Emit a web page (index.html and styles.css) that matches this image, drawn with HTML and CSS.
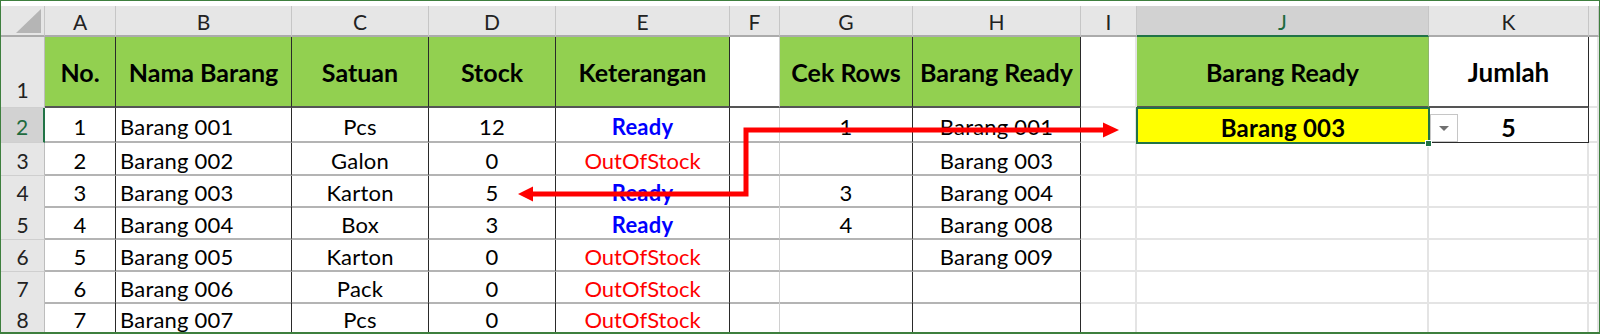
FILE: index.html
```html
<!DOCTYPE html>
<html>
<head>
<meta charset="utf-8">
<link rel="stylesheet" href="styles.css">
</head>
<body>
<div class="sheet">
  <div class="row colhead">
    <div class="ch corner"><svg width="26" height="25" viewBox="0 0 26 25"><polygon points="25,0 25,24 0,24" fill="#b5b5b5"/></svg></div>
    <div class="ch">A</div>
    <div class="ch">B</div>
    <div class="ch">C</div>
    <div class="ch">D</div>
    <div class="ch">E</div>
    <div class="ch">F</div>
    <div class="ch">G</div>
    <div class="ch">H</div>
    <div class="ch">I</div>
    <div class="ch sel">J</div>
    <div class="ch">K</div>
    <div class="ch"></div>
  </div>

  <div class="row r1">
    <div class="rh bottom">1</div>
    <div class="c t th">No.</div>
    <div class="c t th">Nama Barang</div>
    <div class="c t th">Satuan</div>
    <div class="c t th">Stock</div>
    <div class="c t th">Keterangan</div>
    <div class="c tf thb"></div>
    <div class="c t th">Cek Rows</div>
    <div class="c t th">Barang Ready</div>
    <div class="c g"></div>
    <div class="c jh th">Barang Ready</div>
    <div class="c kh thb b">Jumlah</div>
    <div class="c g"></div>
  </div>

  <div class="row r2">
    <div class="rh selrow">2</div>
    <div class="c t">1</div>
    <div class="c t left">Barang 001</div>
    <div class="c t">Pcs</div>
    <div class="c t">12</div>
    <div class="c t ready">Ready</div>
    <div class="c tf"></div>
    <div class="c t">1</div>
    <div class="c t">Barang 001</div>
    <div class="c g"></div>
    <div class="c jsel b">Barang 003</div>
    <div class="c kv b">5</div>
    <div class="c g"></div>
  </div>

  <div class="row r3">
    <div class="rh">3</div>
    <div class="c t">2</div>
    <div class="c t left">Barang 002</div>
    <div class="c t">Galon</div>
    <div class="c t">0</div>
    <div class="c t oos">OutOfStock</div>
    <div class="c tf"></div>
    <div class="c t"></div>
    <div class="c t">Barang 003</div>
    <div class="c g"></div>
    <div class="c g"></div>
    <div class="c g"></div>
    <div class="c g"></div>
  </div>

  <div class="row r4">
    <div class="rh">4</div>
    <div class="c t">3</div>
    <div class="c t left">Barang 003</div>
    <div class="c t">Karton</div>
    <div class="c t">5</div>
    <div class="c t ready">Ready</div>
    <div class="c tf"></div>
    <div class="c t">3</div>
    <div class="c t">Barang 004</div>
    <div class="c g"></div>
    <div class="c g"></div>
    <div class="c g"></div>
    <div class="c g"></div>
  </div>

  <div class="row r5">
    <div class="rh">5</div>
    <div class="c t">4</div>
    <div class="c t left">Barang 004</div>
    <div class="c t">Box</div>
    <div class="c t">3</div>
    <div class="c t ready">Ready</div>
    <div class="c tf"></div>
    <div class="c t">4</div>
    <div class="c t">Barang 008</div>
    <div class="c g"></div>
    <div class="c g"></div>
    <div class="c g"></div>
    <div class="c g"></div>
  </div>

  <div class="row r6">
    <div class="rh">6</div>
    <div class="c t">5</div>
    <div class="c t left">Barang 005</div>
    <div class="c t">Karton</div>
    <div class="c t">0</div>
    <div class="c t oos">OutOfStock</div>
    <div class="c tf"></div>
    <div class="c t"></div>
    <div class="c t">Barang 009</div>
    <div class="c g"></div>
    <div class="c g"></div>
    <div class="c g"></div>
    <div class="c g"></div>
  </div>

  <div class="row r7">
    <div class="rh">7</div>
    <div class="c t">6</div>
    <div class="c t left">Barang 006</div>
    <div class="c t">Pack</div>
    <div class="c t">0</div>
    <div class="c t oos">OutOfStock</div>
    <div class="c tf"></div>
    <div class="c t"></div>
    <div class="c t"></div>
    <div class="c g"></div>
    <div class="c g"></div>
    <div class="c g"></div>
    <div class="c g"></div>
  </div>

  <div class="row r8">
    <div class="rh">8</div>
    <div class="c t">7</div>
    <div class="c t left">Barang 007</div>
    <div class="c t">Pcs</div>
    <div class="c t">0</div>
    <div class="c t oos">OutOfStock</div>
    <div class="c tf"></div>
    <div class="c t"></div>
    <div class="c t"></div>
    <div class="c g"></div>
    <div class="c g"></div>
    <div class="c g"></div>
    <div class="c g"></div>
  </div>

  <div class="overlay">
    <div class="dropdown"><span class="tri"></span></div>
    <div class="handle"></div>
    <svg class="arrows" width="1600" height="334" viewBox="0 0 1600 334">
      <polyline points="531,194 746,194 746,130 1105,130" fill="none" stroke="#ff0000" stroke-width="5"/>
      <polygon points="518,194 533,186.5 533,201.5" fill="#ff0000"/>
      <polygon points="1119,130 1103,122.5 1103,137.5" fill="#ff0000"/>
    </svg>
  </div>
</div>
</body>
</html>
```

FILE: styles.css
```css
* { box-sizing: border-box; }

html, body {
  margin: 0;
  padding: 0;
  background: #ffffff;
}

body {
  font-family: Lato, "Liberation Sans", sans-serif;
  color: #000;
}

.sheet {
  position: relative;
  width: 1600px;
  height: 334px;
  border: 1px solid #3e7f3e;
  border-bottom-width: 2px;
  padding-top: 5px;
  display: flex;
  flex-direction: column;
  overflow: hidden;
  background: #fff;
}

.row {
  display: grid;
  grid-template-columns: 44px 71px 176px 137px 127px 174px 50px 133px 168px 56px 292px 160px 1fr;
}

.colhead { height: 31px; }
.r1 { height: 71px; }
.r2 { height: 35px; }
.r3 { height: 33px; }
.r4 { height: 31px; }
.r5 { height: 33px; }
.r6 { height: 32px; }
.r7 { height: 31px; }
.r8 { height: 29px; }

/* column headers */
.ch {
  background: #e6e6e6;
  border-right: 1px solid #c6c6c6;
  border-bottom: 2px solid #ababab;
  display: flex;
  align-items: center;
  justify-content: center;
  font-size: 21px;
  color: #222;
  padding-top: 2px;
}
.ch.corner {
  justify-content: flex-end;
  align-items: flex-end;
  padding: 0 2px 1px 0;
}
.ch.corner svg { display: block; }
.ch.sel {
  background: #d2d2d2;
  color: #1e6b3f;
  border-bottom: 2px solid #217346;
}

/* row headers */
.rh {
  background: #e6e6e6;
  border-right: 1px solid #bdbdbd;
  border-bottom: 1px solid #cfcfcf;
  display: flex;
  align-items: center;
  justify-content: center;
  font-size: 21px;
  color: #222;
  padding-top: 2px;
}
.rh.bottom {
  align-items: flex-end;
  padding-bottom: 5px;
}
.rh.selrow {
  background: #d2d2d2;
  color: #1e6b3f;
  border-right: 2px solid #217346;
}

/* cells */
.c {
  display: flex;
  align-items: center;
  justify-content: center;
  font-size: 22px;
  letter-spacing: 0.2px;
  white-space: nowrap;
  padding-top: 3px;
  border-right: 2px solid #e4e4e4;
  border-bottom: 2px solid #e4e4e4;
}
.c.t {
  border-right: 1px solid #2a2a2a;
  border-bottom: 2px solid #b4b4b4;
}
.c.tf {
  border-right: 1px solid #d0d0d0;
  border-bottom: 2px solid #b4b4b4;
}
.c.left {
  justify-content: flex-start;
  padding-left: 4px;
}

.th {
  background: #92d050;
  font-weight: 700;
  font-size: 25px;
  letter-spacing: 0;
  padding-top: 0;
}
.r1 .c.t, .r1 .c.tf, .thb {
  border-bottom: 2px solid #555;
}
.r1 .c { padding-top: 0; }

.jh {
  border-right: 1px solid #8fb56a;
  border-bottom: 2px solid #555;
}
.kh {
  border-right: 1px solid #2a2a2a;
  font-size: 26px;
  letter-spacing: 0;
}
.b { font-weight: 700; }

.ready {
  color: #0000ff;
  font-weight: 700;
}
.oos {
  color: #ff0000;
  letter-spacing: 0;
}

.jsel {
  background: #ffff00;
  outline: 2px solid #217346;
  outline-offset: -1px;
  border-right: none;
  border-bottom: none;
  font-size: 24px;
  position: relative;
  z-index: 1;
}
.kv {
  border-right: 1px solid #2a2a2a;
  border-bottom: 1px solid #2a2a2a;
  font-size: 25px;
}

/* overlays */
.overlay {
  position: absolute;
  left: -1px;
  top: -1px;
  width: 1600px;
  height: 334px;
  pointer-events: none;
  z-index: 5;
}
.arrows {
  position: absolute;
  left: 0;
  top: 0;
}
.dropdown {
  position: absolute;
  left: 1430px;
  top: 114px;
  width: 28px;
  height: 28px;
  background: #fff;
  border: 1px solid #c6c6c6;
  display: flex;
  align-items: center;
  justify-content: center;
}
.tri {
  width: 0;
  height: 0;
  border-left: 5px solid transparent;
  border-right: 5px solid transparent;
  border-top: 5px solid #707070;
}
.handle {
  position: absolute;
  left: 1425px;
  top: 140px;
  width: 7px;
  height: 7px;
  background: #217346;
  border: 1px solid #fff;
}
```
